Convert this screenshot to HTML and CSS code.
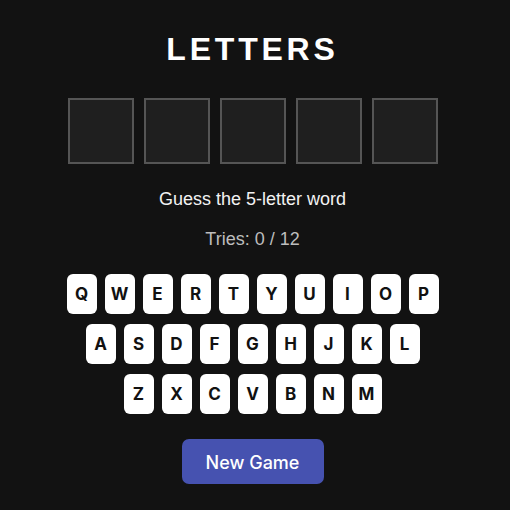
FILE: index.html
```html
<!DOCTYPE html>
<html lang="en">
<head>
<meta charset="utf-8">
<title>Letters</title>
<link rel="stylesheet" href="styles.css">
</head>
<body>
<main class="app">
  <h1 class="title">LETTERS</h1>
  <div class="slots">
    <div class="slot"></div>
    <div class="slot"></div>
    <div class="slot"></div>
    <div class="slot"></div>
    <div class="slot"></div>
  </div>
  <p class="prompt">Guess the 5-letter word</p>
  <p class="tries">Tries: 0 / 12</p>
  <div class="keyboard">
    <div class="krow">
      <button class="key">Q</button><button class="key">W</button><button class="key">E</button><button class="key">R</button><button class="key">T</button><button class="key">Y</button><button class="key">U</button><button class="key">I</button><button class="key">O</button><button class="key">P</button>
    </div>
    <div class="krow">
      <button class="key">A</button><button class="key">S</button><button class="key">D</button><button class="key">F</button><button class="key">G</button><button class="key">H</button><button class="key">J</button><button class="key">K</button><button class="key">L</button>
    </div>
    <div class="krow">
      <button class="key">Z</button><button class="key">X</button><button class="key">C</button><button class="key">V</button><button class="key">B</button><button class="key">N</button><button class="key">M</button>
    </div>
  </div>
  <button class="newgame">New Game</button>
</main>
</body>
</html>
```
FILE: styles.css
```css
html, body {
  margin: 0;
  padding: 0;
  background: #121212;
  height: 100%;
}
body {
  font-family: "Liberation Sans", Arial, sans-serif;
  color: #ffffff;
}
.app {
  width: 505px;
  display: flex;
  flex-direction: column;
  align-items: center;
  padding-top: 31px;
}
.title {
  margin: 0;
  font-size: 32px;
  line-height: 36px;
  font-weight: bold;
  letter-spacing: 3.8px;
}
.slots {
  display: flex;
  gap: 10px;
  margin-top: 31px;
}
.slot {
  width: 66px;
  height: 66px;
  box-sizing: border-box;
  border: 2px solid #555555;
  background: #1f1f1f;
}
.prompt {
  margin: 24px 0 0;
  font-size: 18px;
  line-height: 22px;
  color: #f2f2f2;
}
.tries {
  margin: 18px 0 0;
  font-size: 18px;
  line-height: 22px;
  color: #bdbdbd;
}
.keyboard {
  margin-top: 24px;
  display: flex;
  flex-direction: column;
  align-items: center;
  gap: 10px;
}
.krow {
  display: flex;
  gap: 8px;
}
.key {
  width: 30px;
  height: 40px;
  padding: 0;
  border: none;
  border-radius: 6px;
  background: #ffffff;
  color: #111111;
  font-family: Inter, "Liberation Sans", sans-serif;
  font-size: 17px;
  font-weight: 700;
  display: flex;
  align-items: center;
  justify-content: center;
}
.newgame {
  margin-top: 25px;
  height: 45px;
  width: 142px;
  padding: 2px 0 0;
  border: none;
  border-radius: 7px;
  background: #4652b0;
  color: #ffffff;
  font-family: Inter, "Liberation Sans", sans-serif;
  font-size: 18px;
  font-weight: 500;
}
```
